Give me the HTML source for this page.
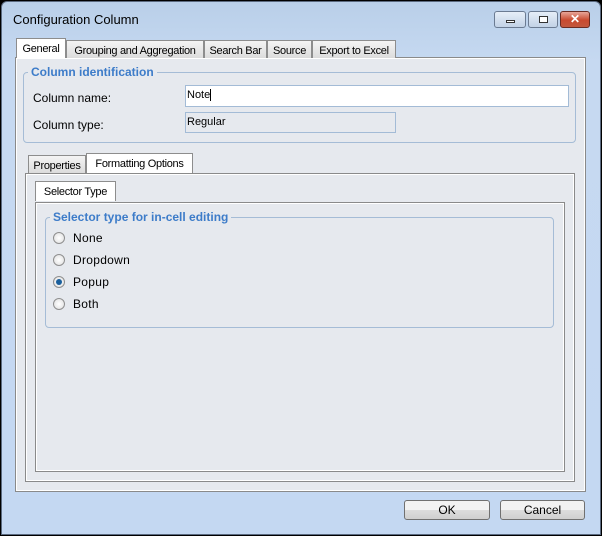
<!DOCTYPE html><html><head><style>
*{box-sizing:border-box}
body{margin:0;width:602px;height:536px;overflow:hidden;background:#000;font-family:"Liberation Sans",sans-serif;font-size:11px;color:#000}
.a{position:absolute}
#win{left:1px;top:1px;width:600px;height:534px;background:linear-gradient(#b9cfe9,#c6d9f1 60px,#c4d8f2);border-radius:6px 6px 0 0;border:1px solid #5b6a80}
.tab{position:absolute;border:1px solid #8d8d8d;border-bottom:none;background:linear-gradient(#f4f4f4,#dcdcdc);padding:4px 3px 0;height:18px;white-space:nowrap;letter-spacing:-0.3px;text-align:center}
.tab.s{background:#fff;height:20px;padding-top:4px}
.panel{position:absolute;border:1px solid #8a8a8a;background:#e6e9ee;box-shadow:inset 0 0 0 1px #fff}
.grp{position:absolute;border:1px solid #a5bcd6;border-radius:4px}
.gt{position:absolute;top:-8px;left:4px;padding:0 3px;background:#e6e9ee;color:#3d7cc9;font-weight:bold;font-size:12px}
.rad{position:absolute;width:12px;height:12px;border-radius:50%;border:1px solid #8f8f8f;background:radial-gradient(#fff,#dedede)}
.lb{position:absolute;font-size:12px;letter-spacing:0.3px}
.btn{position:absolute;height:20px;border:1px solid #707070;border-radius:3px;background:linear-gradient(#f2f2f2 50%,#dddddd 50%,#cfcfcf);text-align:center;line-height:18px;font-size:12px}
</style></head><body>
<div id="win" class="a"></div>
<div class="a" style="left:13px;top:12px;font-size:13px">Configuration Column</div>
<div class="a" style="left:494px;top:11px;width:32px;height:17px;border:1px solid #6b7b92;border-radius:3px;background:linear-gradient(#e6eef8,#c2d2e6)"><div class="a" style="left:11px;top:8px;width:9px;height:3px;border:1px solid #333;background:#fff"></div></div>
<div class="a" style="left:528px;top:11px;width:30px;height:17px;border:1px solid #6b7b92;border-radius:3px;background:linear-gradient(#e6eef8,#c2d2e6)"><div class="a" style="left:10px;top:4px;width:9px;height:7px;border:1px solid #333;background:#fff"></div></div>
<div class="a" style="left:560px;top:11px;width:30px;height:17px;border:1px solid #6a2b22;border-radius:3px;background:linear-gradient(#e8a699,#c8492f 55%,#c2573e);color:#fff;font-weight:bold;text-align:center;font-size:12px;line-height:15px">✕</div>

<div class="panel" style="left:15px;top:57px;width:571px;height:435px"></div>
<div class="tab s" style="left:16px;top:38px;width:50px">General</div>
<div class="tab" style="left:66px;top:40px;width:138px">Grouping and Aggregation</div>
<div class="tab" style="left:204px;top:40px;width:63px">Search Bar</div>
<div class="tab" style="left:267px;top:40px;width:45px">Source</div>
<div class="tab" style="left:312px;top:40px;width:84px">Export to Excel</div>

<div class="grp" style="left:23px;top:72px;width:553px;height:71px"><div class="gt" style="top:-8px">Column identification</div></div>
<div class="a" style="left:33px;top:91px;font-size:12px">Column name:</div>
<div class="a" style="left:185px;top:85px;width:384px;height:22px;background:#fff;border:1px solid #a3bbd6;padding:3px 1px">Note<span style="border-left:1px solid #000"></span></div>
<div class="a" style="left:33px;top:118px;font-size:12px">Column type:</div>
<div class="a" style="left:185px;top:112px;width:211px;height:21px;border:1px solid #a3bbd6;padding:3px 1px">Regular</div>

<div class="panel" style="left:25px;top:173px;width:550px;height:309px"></div>
<div class="tab" style="left:28px;top:155px;width:58px">Properties</div>
<div class="tab s" style="left:86px;top:153px;width:107px;background:#fff">Formatting Options</div>
<div class="panel" style="left:35px;top:202px;width:530px;height:270px"></div>
<div class="tab s" style="left:35px;top:181px;width:81px">Selector Type</div>

<div class="grp" style="left:45px;top:217px;width:509px;height:111px"><div class="gt">Selector type for in-cell editing</div></div>
<div class="rad" style="left:53px;top:232px"></div><div class="lb" style="left:73px;top:231px">None</div>
<div class="rad" style="left:53px;top:254px"></div><div class="lb" style="left:73px;top:253px">Dropdown</div>
<div class="rad" style="left:53px;top:276px"><div class="a" style="left:2px;top:2px;width:6px;height:6px;border-radius:50%;background:#1a5f9c"></div></div><div class="lb" style="left:73px;top:275px">Popup</div>
<div class="rad" style="left:53px;top:298px"></div><div class="lb" style="left:73px;top:297px">Both</div>

<div class="btn" style="left:404px;top:500px;width:86px">OK</div>
<div class="btn" style="left:500px;top:500px;width:85px">Cancel</div>
</body></html>
